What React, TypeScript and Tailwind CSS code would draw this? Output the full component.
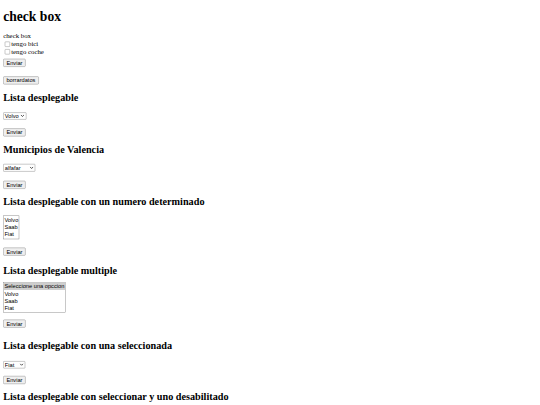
// The reference is a plain, unstyled HTML form page photographed zoomed out,
// so the page is laid out at the browser's default sizes and shrunk as a whole.
const sans = "font-['Liberation_Sans',Arial,sans-serif]";

function Btn({ children, className = "" }: { children: string; className?: string }) {
  return (
    <button
      type="button"
      className={`${sans} h-[20px] whitespace-nowrap rounded-[3px] border border-[#767676] bg-[#efefef] px-[7px] text-[14.2px] leading-[16px] text-black ${className}`}
    >
      {children}
    </button>
  );
}

function Heading({ children, className = "" }: { children: string; className?: string }) {
  return (
    <h2 className={`whitespace-nowrap text-[25.5px] leading-[27.5px] font-bold ${className}`}>{children}</h2>
  );
}

function Select({ value, className = "" }: { value: string; className?: string }) {
  return (
    <div
      className={`${sans} flex h-[18.5px] items-center justify-between rounded-[2px] border border-[#767676] bg-white pl-[3px] pr-[3.5px] text-[14.2px] leading-[16px] text-black ${className}`}
    >
      <span className="whitespace-nowrap">{value}</span>
      <svg width="10" height="7" viewBox="0 0 10 7" className="shrink-0">
        <path d="M1 1.2 L5 5.2 L9 1.2" fill="none" stroke="#111" strokeWidth="1.8" />
      </svg>
    </div>
  );
}

function ListBox({
  options,
  selected,
  className = "",
}: {
  options: string[];
  selected?: string;
  className?: string;
}) {
  return (
    <div
      className={`${sans} flex flex-col border border-[#767676] bg-white py-[1px] text-[14.2px] leading-[18.25px] text-black ${className}`}
    >
      {options.map((o) => (
        <span
          key={o}
          className={`whitespace-nowrap px-[2px] ${o === selected ? "bg-[#cecece]" : ""}`}
        >
          {o}
        </span>
      ))}
    </div>
  );
}

function Check({ label }: { label: string }) {
  return (
    <label className="flex h-[18.75px] items-center whitespace-nowrap">
      <span className="ml-[4px] mr-[3px] size-[13px] shrink-0 rounded-[2px] border border-[#767676] bg-white" />
      {label}
    </label>
  );
}

export default function App() {
  return (
    <div className="h-[405px] w-[540px] overflow-hidden bg-white">
      <div className="flex w-[1350px] origin-top-left scale-[0.4] flex-col items-start px-[8px] font-['Liberation_Serif','Times_New_Roman',serif] text-[17px] leading-[18.75px] text-black">
        <h1 className="mt-[20.75px] text-[34px] leading-[39px] font-bold">check box</h1>
        <p className="mt-[22.5px]">check box</p>
        <Check label="tengo bici" />
        <Check label="tengo coche" />
        <Btn className="mt-[8.5px]">Enviar</Btn>
        <Btn className="mt-[23.75px]">borrardatos</Btn>

        <Heading className="mt-[19px]">Lista desplegable</Heading>
        <Select value="Volvo" className="mt-[23.25px] w-[57.5px]" />
        <Btn className="mt-[21.5px]">Enviar</Btn>

        <Heading className="mt-[20.5px]">Municipios de Valencia</Heading>
        <Select value="alfafar" className="mt-[21.75px] w-[80px]" />
        <Btn className="mt-[23.5px]">Enviar</Btn>

        <Heading className="mt-[19px]">Lista desplegable con un numero determinado</Heading>
        <ListBox options={["Volvo", "Saab", "Fiat"]} className="mt-[20px] w-[40px]" />
        <Btn className="mt-[21px]">Enviar</Btn>

        <Heading className="mt-[25px]">Lista desplegable multiple</Heading>
        <ListBox
          options={["Seleccione una opccion", "Volvo", "Saab", "Fiat"]}
          selected="Seleccione una opccion"
          className="mt-[14px] w-[156px]"
        />
        <Btn className="mt-[17px]">Enviar</Btn>

        <Heading className="mt-[31px]">Lista desplegable con una seleccionada</Heading>
        <Select value="Fiat" className="mt-[25px] w-[55px]" />
        <Btn className="mt-[19px]">Enviar</Btn>

        <Heading className="mt-[17px]">Lista desplegable con seleccionar y uno desabilitado</Heading>
      </div>
    </div>
  );
}
